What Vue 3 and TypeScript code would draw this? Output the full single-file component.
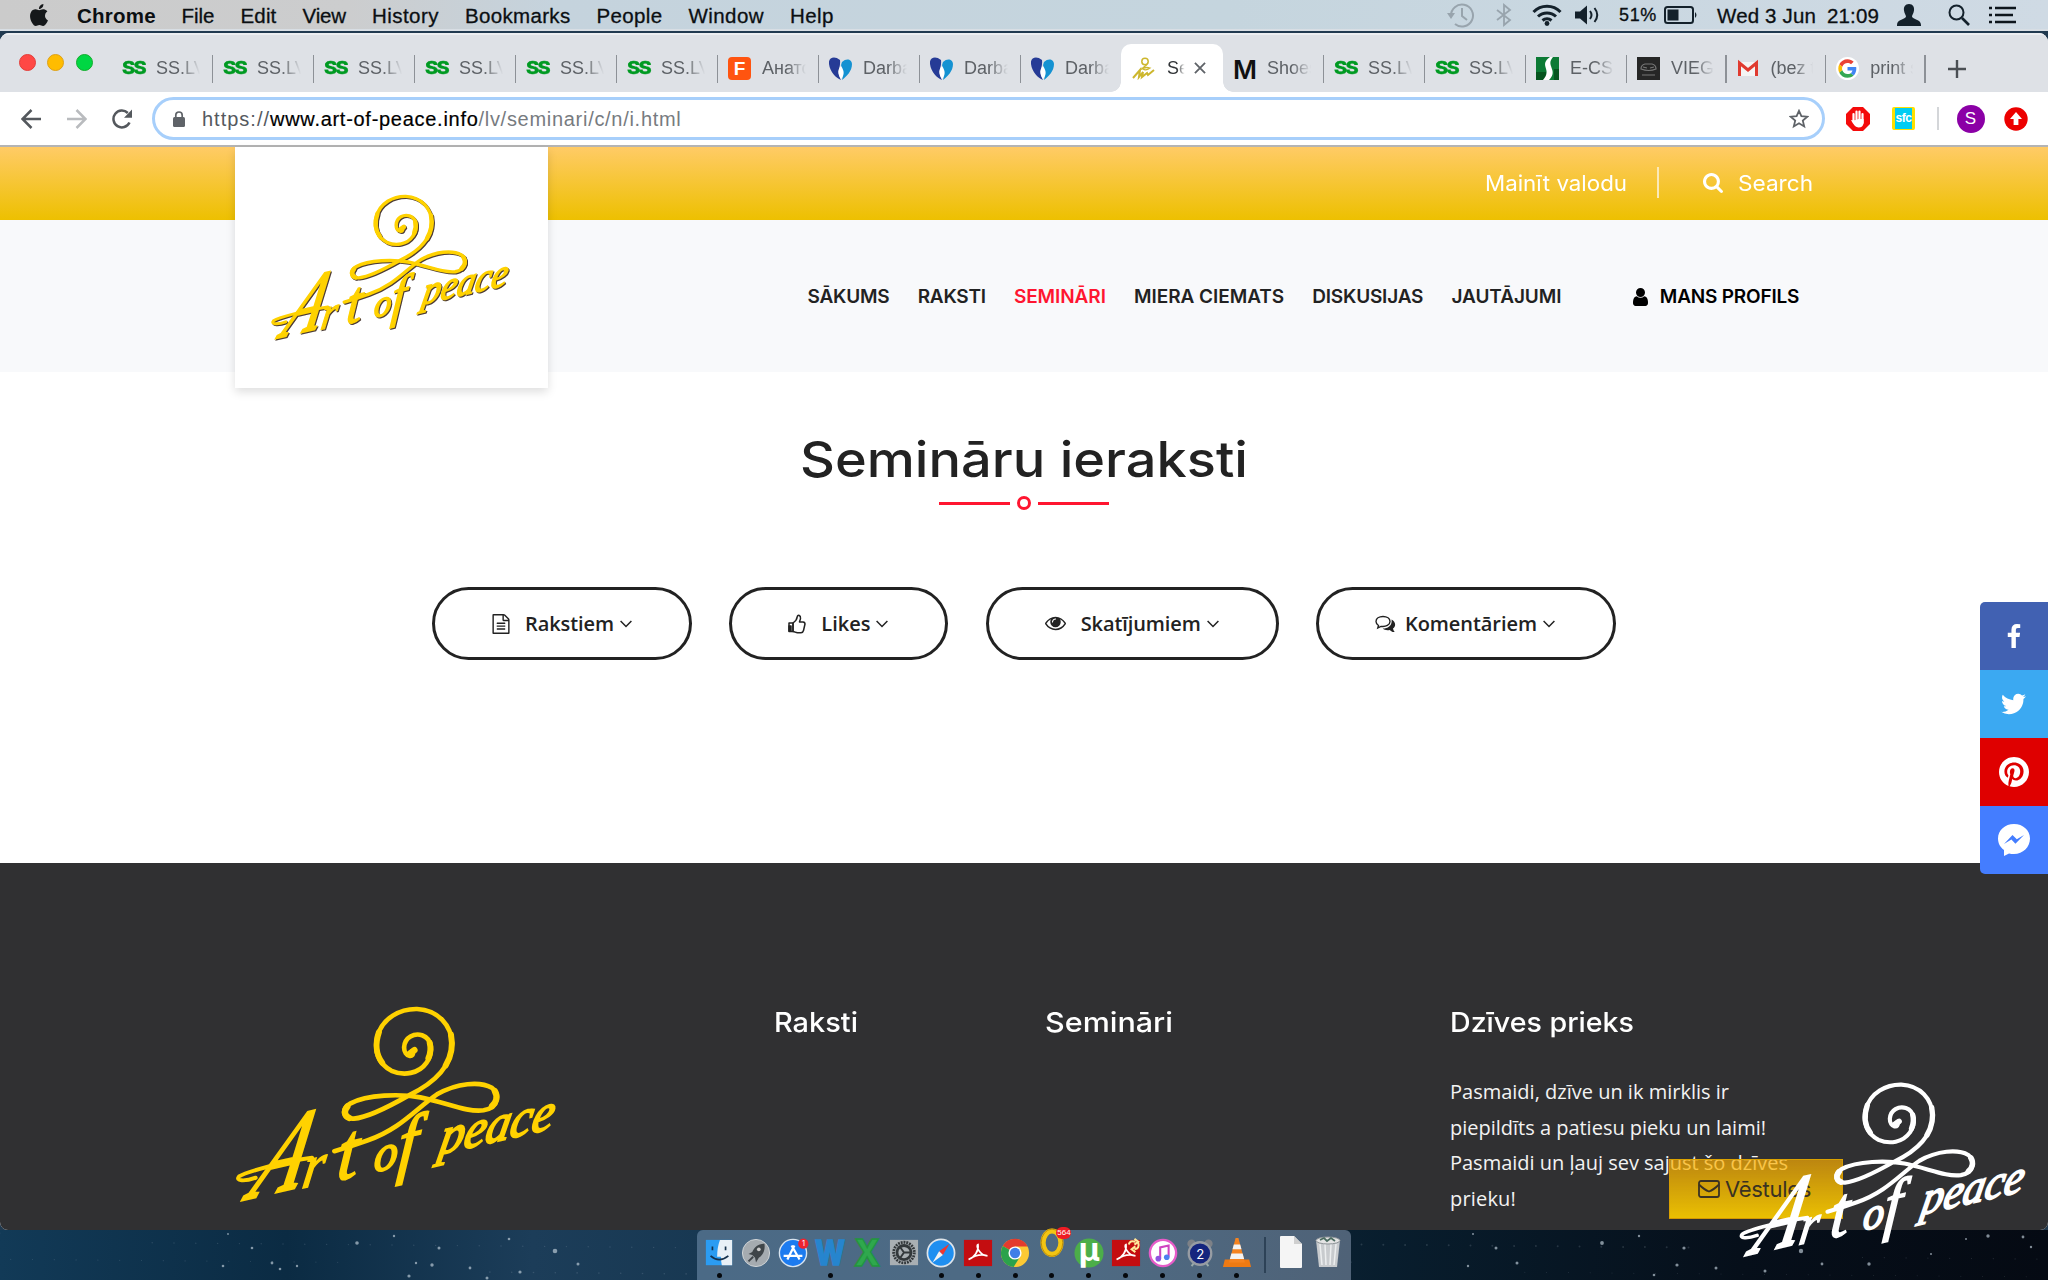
<script setup lang="ts">
interface Tab { kind: string; title: string; active?: boolean; short?: boolean }
interface Fitted { text: string; w: number }

// Makes a label occupy the requested width in pixels: by letter-spacing,
// or by widening the glyphs when the "wide" modifier is set.
const vFit = {
  mounted(el: HTMLElement, binding: { value: number; modifiers: Record<string, boolean> }) {
    const natural = el.getBoundingClientRect().width
    if (binding.modifiers.wide) {
      el.style.transformOrigin = '0 50%'
      el.style.transform = `scaleX(${(binding.value / natural).toFixed(4)})`
      el.style.marginRight = `${(binding.value - natural).toFixed(2)}px`
      return
    }
    const step = (binding.value - natural) / (el.textContent ?? '').length
    el.style.letterSpacing = `${step.toFixed(3)}px`
  },
}

const menu: Fitted[] = [
  { text: 'File', w: 33 }, { text: 'Edit', w: 36 }, { text: 'View', w: 43.5 },
  { text: 'History', w: 67 }, { text: 'Bookmarks', w: 105.5 }, { text: 'People', w: 66 },
  { text: 'Window', w: 75.5 }, { text: 'Help', w: 44 },
]

const tabs: Tab[] = [
  ...Array.from({ length: 6 }, () => ({ kind: 'ss', title: 'SS.LV' })),
  { kind: 'f', title: 'Анатомия' },
  { kind: 'heart', title: 'Darba' }, { kind: 'heart', title: 'Darba' }, { kind: 'heart', title: 'Darba' },
  { kind: 'logo', title: 'Sem', active: true },
  { kind: 'm', title: 'Shoes' },
  { kind: 'ss', title: 'SS.LV' }, { kind: 'ss', title: 'SS.LV' },
  { kind: 'ecs', title: 'E-CSN' },
  { kind: 'vieg', title: 'VIEGL', short: true },
  { kind: 'gmail', title: '(bez te', short: true },
  { kind: 'google', title: 'print s', short: true },
]

const nav = [
  { text: 'SĀKUMS', w: 82 }, { text: 'RAKSTI', w: 68 }, { text: 'SEMINĀRI', w: 92, on: true },
  { text: 'MIERA CIEMATS', w: 150 }, { text: 'DISKUSIJAS', w: 111 }, { text: 'JAUTĀJUMI', w: 110 },
]

const filters = [
  { icon: 'file', text: 'Rakstiem', w: 89, width: 260, gap: 15, pad: 57 },
  { icon: 'like', text: 'Likes', w: 49, width: 219, gap: 15, pad: 56 },
  { icon: 'eye', text: 'Skatījumiem', w: 120, width: 293, gap: 15, pad: 56 },
  { icon: 'talk', text: 'Komentāriem', w: 132, width: 300, gap: 9, pad: 56 },
]

const prose: Fitted[] = [
  { text: 'Pasmaidi, dzīve un ik mirklis ir', w: 279 },
  { text: 'piepildīts a patiesu pieku un laimi!', w: 316 },
  { text: 'Pasmaidi un ļauj sev sajust šo dzīves', w: 338 },
  { text: 'prieku!', w: 66 },
]

const dock = [
  { id: 'finder', run: true }, { id: 'launch' }, { id: 'store' }, { id: 'word', run: true },
  { id: 'excel' }, { id: 'prefs' }, { id: 'safari', run: true }, { id: 'acrobat', run: true },
  { id: 'chrome', run: true }, { id: 'opera', run: true }, { id: 'torrent', run: true },
  { id: 'acrobat2', run: true }, { id: 'itunes', run: true }, { id: 'clock', run: true }, { id: 'vlc', run: true },
]

const knownStars: number[][] = [
  [228, 4, .9], [252, 18, 1.3], [357, 13, 1.8], [394, 6, 1.2], [439, 18, 1.5], [555, 21, 2.3], [432, 35, 1.7],
  [272, 33, 1.4], [280, 39, 1.3], [297, 36, 1.2], [409, 46, 1.6], [470, 38, 1.4], [520, 42, 1.6], [487, 48, 1.5],
  [509, 9, 1.3], [416, 33, 1.2], [578, 34, 1.5], [223, 36, 1.3], [1473, 4, 1], [1496, 18, 1.5], [1602, 13, 1.9],
  [1639, 6, 1.2], [1684, 18, 1.6], [1517, 33, 1.5], [1468, 36, 1.2], [1677, 35, 1.6], [1716, 38, 1.5],
  [1801, 21, 2.2], [1822, 34, 1.4], [1869, 34, 1.7], [1765, 41, 1.5], [1988, 6, 1.7], [1966, 9, 1], [2023, 7, 1.4],
  [2031, 17, 1.2], [1654, 45, 1.3], [1931, 24, 1],
]
const stars = knownStars.concat(
  Array.from({ length: 150 }, (_, i) => [(i * 337.7) % 2048, 3 + ((i * 29.3) % 44), 0.5 + ((i * 7) % 6) / 10]),
)
</script>

<template>
  <div class="screen">
    <svg class="defs" width="0" height="0" aria-hidden="true">
      <symbol id="brand" viewBox="40 76 976 596" overflow="visible">
        <g fill="none" stroke="currentColor" stroke-linecap="round" stroke-linejoin="round">
          <path stroke-width="14" d="M576 214C585 237 550 234 551 203C553 172 582 160 605 167C636 178 640 220 618 250C595 283 550 290 513 274C472 252 460 212 470 172C485 114 540 87 590 88C652 91 695 136 695 195C693 262 640 312 565 348C500 385 440 415 400 418C365 420 360 390 390 372C440 345 540 343 600 354C680 370 740 400 790 393C835 385 840 345 815 325C780 305 710 310 650 345C590 385 540 450 440 484Q390 502 341 516" />
          <path stroke-width="19" d="M568 222L582 212" />
          <path stroke-width="18" d="M475 158C464 190 466 225 485 250M692 165C699 200 690 235 676 258M628 190Q634 212 624 236" />
          <path stroke-width="19" d="M824 335C834 352 828 370 816 380M380 382C368 396 372 411 386 416" />
          <path stroke-width="12" d="M104 596C70 608 42 606 54 592C75 578 190 547 274 536" />
        </g>
        <g class="script" fill="currentColor" stroke="currentColor">
          <text font-size="322" stroke-width="9" textLength="150" lengthAdjust="spacingAndGlyphs" transform="translate(76 660) rotate(-13) skewX(-36)">A</text>
          <text font-size="172" stroke-width="5" transform="translate(240 628) rotate(-13) skewX(-22)">r</text>
          <text font-size="232" stroke-width="5" transform="translate(345 606) rotate(-13) skewX(-18)">t</text>
          <text font-size="145" stroke-width="6" transform="translate(458 580) rotate(-13) skewX(-18)">o</text>
          <text font-size="215" stroke-width="6" transform="translate(528 573) rotate(-13) skewX(-18)">f</text>
          <text font-size="150" stroke-width="6" textLength="352" lengthAdjust="spacingAndGlyphs" transform="translate(652 527) rotate(-13) skewX(-24)">peace</text>
        </g>
      </symbol>
    </svg>

    <header class="menubar">
      <svg class="apple" viewBox="0 0 24 24"><path d="M12.152 6.896c-.948 0-2.415-1.078-3.96-1.04-2.04.027-3.91 1.183-4.961 3.014-2.117 3.675-.546 9.103 1.519 12.09 1.013 1.454 2.208 3.09 3.792 3.039 1.52-.065 2.09-.987 3.935-.987 1.831 0 2.35.987 3.96.948 1.637-.026 2.676-1.48 3.676-2.948 1.156-1.688 1.636-3.325 1.662-3.415-.039-.013-3.182-1.221-3.22-4.857-.026-3.04 2.48-4.494 2.597-4.559-1.429-2.09-3.623-2.324-4.39-2.376-2-.156-3.675 1.09-4.61 1.09zM15.53 3.83c.843-1.012 1.4-2.427 1.245-3.83-1.207.052-2.662.805-3.532 1.818-.78.896-1.454 2.338-1.273 3.714 1.338.104 2.715-.688 3.559-1.701" /></svg>
      <b v-fit="79" class="app">Chrome</b>
      <nav class="menus"><span v-for="m in menu" :key="m.text" v-fit="m.w">{{ m.text }}</span></nav>
      <div class="status">
        <svg class="tm" width="28" height="26" viewBox="0 0 28 26" fill="none" stroke="#98a4ad" stroke-width="2"><path d="M4 14A11 11 0 1 1 8 22M15 6v8l5 4" /><path d="M0 11h8l-4 6z" fill="#98a4ad" stroke="none" /></svg>
        <svg class="bt" width="16" height="24" viewBox="0 0 16 24" fill="none" stroke="#98a4ad" stroke-width="1.8"><path d="M1 7l13 10-6 5V2l6 5L1 17" /></svg>
        <svg class="wifi" width="30" height="22" viewBox="0 0 30 22" fill="none" stroke="#14212b" stroke-width="3"><path d="M1.5 8a19 19 0 0 1 27 0M6 12.500a13 13 0 0 1 18 0M10.500 16.500a7 7 0 0 1 9 0" /><circle cx="15" cy="19.500" r="2.400" fill="#14212b" stroke="none" /></svg>
        <svg class="vol" width="26" height="20" viewBox="0 0 26 20"><path d="M0 6.500h5l7-6v19l-7-6H0z" fill="#14212b" /><path d="M15 6q3 4 0 8M19.500 3q5.500 7 0 14" fill="none" stroke="#14212b" stroke-width="2" /></svg>
        <span v-fit="38" class="pct">51%</span>
        <svg class="bat" width="34" height="18" viewBox="0 0 34 18"><rect x="1" y="1" width="28" height="16" rx="2.500" fill="none" stroke="#14212b" stroke-width="2" /><rect x="3.500" y="3.500" width="11" height="11" fill="#14212b" /><path d="M31 6q3 3 0 6z" fill="#14212b" /></svg>
        <span v-fit="99" class="date">Wed 3 Jun</span><span v-fit="52" class="time">21:09</span>
        <svg class="who" width="24" height="22" viewBox="0 0 24 22"><path d="M12 0c4 0 5.500 3 5 6.500-.4 3-1.800 4.500-2 6C15.500 15.500 24 15 24 21v1H0v-1c0-6 8.500-5.500 9-8.500-.2-1.500-1.600-3-2-6C6.500 3 8 0 12 0z" fill="#14212b" /></svg>
        <svg class="spot" width="22" height="22" viewBox="0 0 22 22" fill="none" stroke="#14212b"><circle cx="8.500" cy="8.500" r="7" stroke-width="2" /><path d="M14 14l7 7" stroke-width="2.600" /></svg>
        <svg class="list" width="28" height="18" viewBox="0 0 28 18" stroke="#0d151c" stroke-width="2.600"><path d="M0 2h3M0 9h3M0 16h3M6 2h21M6 9h18M6 16h21" /></svg>
      </div>
    </header>

    <main class="window">
      <div class="strip">
        <div class="lights"><i class="red" /><i class="amber" /><i class="green" /></div>
        <div v-for="(t, i) in tabs" :key="i" class="tab" :class="{ active: t.active, short: t.short, last: i === 9 }">
          <span v-if="t.kind === 'ss'" class="fav ss">SS</span>
          <span v-else-if="t.kind === 'f'" class="fav eff">F</span>
          <svg v-else-if="t.kind === 'heart'" class="fav" viewBox="0 0 23 23"><path d="M11 3C5-2-1 1 0 7c1 8 7 14 12 16-5-10 0-12-1-20z" fill="#263b96" /><path d="M13 5c5-5 10-2 10 2 0 7-5 12-10 16 3-9-3-12 0-18z" fill="#1592d2" /><path d="M12 9c-5 5-2 10 0 13 3-4 4-7 0-13z" fill="#fff" /></svg>
          <svg v-else-if="t.kind === 'logo'" class="fav gold" viewBox="0 0 23 23" fill="none" stroke="#cdb72e"><circle cx="13" cy="4.500" r="3.200" stroke-width="1.500" /><path d="M15 7.500L9 12.500q4-3 9-1.500-4 3-7 1" stroke-width="1.300" /><path d="M1 21L8 13l-1 7 4-5-1 5 5-4 1 2 6-5" stroke-width="2" /></svg>
          <span v-else-if="t.kind === 'm'" class="fav em">M</span>
          <svg v-else-if="t.kind === 'ecs'" class="fav" viewBox="0 0 23 23"><path d="M0 0h23v23H0z" fill="#0c7a35" /><path d="M0 15h10v8H0zM18 12h5v11h-5z" fill="#06551f" /><path d="M14 0C2 9 17 12 7 23h6C23 13 9 9 17 0z" fill="#fff" /></svg>
          <svg v-else-if="t.kind === 'vieg'" class="fav" viewBox="0 0 23 23"><path d="M0 0h23v23H0z" fill="#262626" /><path d="M4 12q0-4 4-5h7q4 1 4 5-7 3-15 0zM6 10l4 1M17 10l-4 1M5 18h13" fill="none" stroke="#777" stroke-width="1.200" /></svg>
          <svg v-else-if="t.kind === 'gmail'" class="fav" viewBox="0 0 23 23"><path d="M3 5h16v14H3z" fill="#f4f4f4" /><path d="M2.500 19V6l8.500 7 8.500-7v13" fill="none" stroke="#e03a2f" stroke-width="3" /></svg>
          <svg v-else class="fav" viewBox="-6 -6 60 60"><circle cx="24" cy="24" r="30" fill="#fff" /><path fill="#EA4335" d="M24 9.500c3.540 0 6.710 1.220 9.210 3.600l6.850-6.850C35.900 2.380 30.470 0 24 0 14.620 0 6.510 5.380 2.560 13.220l7.980 6.190C12.430 13.720 17.740 9.500 24 9.500z" /><path fill="#4285F4" d="M46.980 24.550c0-1.570-.15-3.090-.38-4.550H24v9.020h12.940c-.58 2.960-2.260 5.480-4.780 7.180l7.730 6c4.510-4.180 7.090-10.360 7.090-17.650z" /><path fill="#FBBC05" d="M10.530 28.590c-.48-1.450-.76-2.990-.76-4.590s.27-3.140.76-4.590l-7.980-6.190C.92 16.460 0 20.120 0 24c0 3.880.92 7.540 2.560 10.780l7.970-6.190z" /><path fill="#34A853" d="M24 48c6.480 0 11.930-2.130 15.890-5.810l-7.730-6c-2.150 1.450-4.920 2.300-8.160 2.300-6.260 0-11.570-4.220-13.470-9.910l-7.980 6.190C6.510 42.620 14.620 48 24 48z" /></svg>
          <span class="title">{{ t.title }}</span>
          <svg v-if="t.active" class="close" width="12" height="12" viewBox="0 0 13 13" stroke="#5f6368" stroke-width="2"><path d="M1 1l11 11M12 1L1 12" /></svg>
        </div>
        <svg class="plus" width="18" height="18" viewBox="0 0 18 18" stroke="#4b4f54" stroke-width="2.400"><path d="M9 0v18M0 9h18" /></svg>
      </div>

      <div class="toolbar">
        <svg class="ic" width="20" height="20" viewBox="0 0 20 20" fill="none" stroke="#54585d" stroke-width="2.500"><path d="M20 10H2M10.500 1l-9 9 9 9" /></svg>
        <svg class="ic fwd" width="20" height="20" viewBox="0 0 20 20" fill="none" stroke="#b9bbbe" stroke-width="2.500"><path d="M0 10h18M9.500 1l9 9-9 9" /></svg>
        <svg class="ic re" width="20" height="20" viewBox="0 0 20 20"><path d="M17.500 13.500A8.400 8.400 0 1 1 15.800 4" fill="none" stroke="#54585d" stroke-width="2.500" /><path d="M20 .5V8.700h-8z" fill="#54585d" /></svg>
        <div class="omnibox">
          <svg width="12" height="16" viewBox="0 0 12 16"><rect y="6" width="12" height="10" rx="1.500" fill="#5f6368" /><path d="M2.800 6V4.200a3.200 3.200 0 0 1 6.400 0V6" fill="none" stroke="#5f6368" stroke-width="1.700" /></svg>
          <p class="url"><span v-fit="68">https://</span><b v-fit="208.500">www.art-of-peace.info</b><span v-fit="203" class="dim">/lv/seminari/c/n/i.html</span></p>
          <svg class="star" width="20" height="20" viewBox="0 0 20 20" fill="none" stroke="#5f6368" stroke-width="1.800"><path d="M10 1.800l2.400 5.400 5.900.5-4.500 3.900 1.400 5.800L10 14.300l-5.200 3.100 1.400-5.800L1.700 7.700l5.900-.5z" /></svg>
        </div>
        <svg class="hand" width="24" height="24" viewBox="0 0 24 24"><path d="M7 0h10l7 7v10l-7 7H7l-7-7V7z" fill="#f40b0b" /><path d="M7.500 7v7M10.500 4.500V14M13.500 4.500V14M16.500 7v9" stroke="#fff" stroke-width="2.200" stroke-linecap="round" /><path d="M5 13q5 1 7-1h5.600v4q-.6 4.500-5 4.500-4 0-7.600-7.500z" fill="#fff" /></svg>
        <span class="sfc">sfc</span>
        <i class="bar" />
        <span class="avatar">S</span>
        <svg class="up" width="24" height="24" viewBox="0 0 24 24"><circle cx="12" cy="12" r="11.700" fill="#ec0000" /><path d="M12 5l6 7h-3.600v6H9.600v-6H6z" fill="#fff" /></svg>
      </div>

      <section class="page">
        <div class="gold-bar">
          <span v-fit.wide="142">Mainīt valodu</span><i />
          <svg width="20" height="20" viewBox="64 128 1664 1664" fill="#fff"><path d="M1216 832q0-185-131.500-316.500t-316.500-131.500-316.500 131.500-131.500 316.500 131.500 316.500 316.500 131.500 316.500-131.500 131.500-316.500zm512 832q0 52-38 90t-90 38q-54 0-90-38l-343-342q-179 124-399 124-143 0-273.500-55.500t-225-150-150-225-55.500-273.500 55.500-273.500 150-225 225-150 273.500-55.500 273.500 55.500 225 150 150 225 55.500 273.500q0 220-124 399l343 343q37 37 37 90z" /></svg>
          <span v-fit.wide="75">Search</span>
        </div>
        <div class="navbar">
          <a v-for="n in nav" :key="n.text" v-fit="n.w" :class="{ on: n.on }">{{ n.text }}</a>
          <svg width="15" height="18" viewBox="256 128 1280 1536"><path d="M1536 1399q0 109-62.500 187t-150.500 78h-854q-88 0-150.500-78t-62.500-187q0-85 8.500-160.500t31.500-152 58.500-131 94-89 134.500-34.500q131 128 313 128t313-128q76 0 134.500 34.500t94 89 58.500 131 31.500 152 8.500 160.500zm-256-887q0 159-112.500 271.500t-271.500 112.500-271.500-112.500-112.500-271.500 112.500-271.500 271.500-112.500 271.500 112.500 112.500 271.500z" /></svg>
          <a v-fit="139.500" class="me">MANS PROFILS</a>
        </div>
        <div class="card"><svg class="brand"><use href="#brand" width="241" height="148" /></svg></div>

        <div class="content">
          <h1 v-fit.wide="448" class="heading">Semināru ieraksti</h1>
          <div class="rule"><i /><b /><i /></div>
          <div class="filters">
            <button v-for="f in filters" :key="f.text" :style="{ width: f.width + 'px', paddingLeft: f.pad + 'px' }">
              <svg v-if="f.icon === 'file'" width="18" height="20" viewBox="128 0 1536 1792"><path d="M1596 380q28 28 48 76t20 88v1152q0 40-28 68t-68 28h-1344q-40 0-68-28t-28-68v-1600q0-40 28-68t68-28h896q40 0 88 20t76 48zm-444-244v376h376q-10-29-22-41l-313-313q-12-12-41-22zm384 1528v-1024h-416q-40 0-68-28t-28-68v-416h-768v1536h1280zm-1024-864q0-14 9-23t23-9h704q14 0 23 9t9 23v64q0 14-9 23t-23 9h-704q-14 0-23-9t-9-23v-64zm736 224q14 0 23 9t9 23v64q0 14-9 23t-23 9h-704q-14 0-23-9t-9-23v-64q0-14 9-23t23-9h704zm0 256q14 0 23 9t9 23v64q0 14-9 23t-23 9h-704q-14 0-23-9t-9-23v-64q0-14 9-23t23-9h704z" /></svg>
              <svg v-else-if="f.icon === 'like'" width="18" height="20" viewBox="0 0 18 20" fill="none" stroke="#222" stroke-width="1.500" stroke-linejoin="round"><path d="M5 9C8 7 9 5 9.300 2.500 10 .5 12.800 1 12.500 4.500 12.300 6 11.500 7 11.500 8H15q2 .2 2 2l-1.500 6.500Q15 18.600 13 18.700H9.500C7.500 18.500 7 17.800 5 17.500z" /><path d="M1 9h4v8.500H1z" /><path d="M1 12h2v5H1z" fill="#222" /></svg>
              <svg v-else-if="f.icon === 'eye'" width="21" height="15" viewBox="0 384 1792 1152"><path d="M1664 960q-152-236-381-353 61 104 61 225 0 185-131.500 316.500t-316.500 131.500-316.500-131.500-131.500-316.500q0-121 61-225-229 117-381 353 133 205 333.500 326.500t434.500 121.500 434.500-121.500 333.500-326.500zm-720-384q0-20-14-34t-34-14q-125 0-214.500 89.500t-89.500 214.500q0 20 14 34t34 14 34-14 14-34q0-86 61-147t147-61q20 0 34-14t14-34zm848 384q0 34-20 69-140 230-376.500 368.500t-499.500 138.500-499.500-139-376.500-368q-20-35-20-69t20-69q140-229 376.500-368t499.500-139 499.500 139 376.500 368q20 35 20 69z" /></svg>
              <svg v-else width="21" height="18" viewBox="0 0 21 18"><path d="M8 1.500C4 1.500 1 3.600 1 6.500c0 2 1 3 2.500 4L2.800 13 6 11.400c5 .7 9-1.500 9-4.900 0-2.900-3-5-7-5z" fill="none" stroke="#222" stroke-width="1.400" /><path d="M16.500 4.500c4 2 5 6.500 1.500 9 .2 1.600 1 2.600 1.700 3.500-2 .3-3.500-.5-5-2-3 .5-5.500 0-7-1.500 6 0 9.800-3.500 8.800-9z" fill="#222" /></svg>
              <span v-fit="f.w" :style="{ marginLeft: f.gap + 'px' }">{{ f.text }}</span>
              <svg class="chev" width="12" height="8" viewBox="0 0 12 8" fill="none" stroke="#222" stroke-width="1.500"><path d="M.6 1L6 6.500 11.400 1" /></svg>
            </button>
          </div>
        </div>

        <footer class="footer">
          <svg class="brand"><use href="#brand" width="325" height="198" /></svg>
          <h2 v-fit.wide="84" class="c1">Raksti</h2>
          <h2 v-fit.wide="128" class="c2">Semināri</h2>
          <div class="c3">
            <h2 v-fit.wide="184">Dzīves prieks</h2>
            <p v-for="l in prose" :key="l.text"><span v-fit="l.w">{{ l.text }}</span></p>
          </div>
        </footer>

        <aside class="share">
          <a class="fb"><svg width="14" height="24" viewBox="479 0 864 1664"><path d="M1343 12v264h-157q-86 0-116 36t-30 108v189h293l-39 296h-254v759h-306v-759h-255v-296h255v-218q0-186 104-288.500t277-102.500q147 0 228 12z" /></svg></a>
          <a class="tw"><svg width="25" height="22" viewBox="108 250 1576 1290"><path d="M1684 408q-67 98-162 167 1 14 1 42 0 130-38 259.500t-115.500 248.500-184.500 210.500-258 146-323 54.500q-271 0-496-145 35 4 78 4 225 0 401-138-105-2-188-64.500t-114-159.500q33 5 61 5 43 0 85-11-112-23-185.500-111.500t-73.500-205.500v-4q68 38 146 41-66-44-105-115t-39-154q0-88 44-163 121 149 294.500 238.500t371.500 99.500q-8-38-8-74 0-134 94.500-228.500t228.500-94.500q140 0 236 102 109-21 205-78-37 115-142 178 93-10 186-50z" /></svg></a>
          <a class="pi"><svg width="30" height="30" viewBox="0 0 24 24"><path d="M12 0C5.373 0 0 5.372 0 12c0 5.084 3.163 9.426 7.627 11.174-.105-.949-.2-2.405.042-3.441.218-.937 1.407-5.965 1.407-5.965s-.359-.719-.359-1.782c0-1.668.967-2.914 2.171-2.914 1.023 0 1.518.769 1.518 1.690 0 1.029-.655 2.568-.994 3.995-.283 1.194.599 2.169 1.777 2.169 2.133 0 3.772-2.249 3.772-5.495 0-2.873-2.064-4.882-5.012-4.882-3.414 0-5.418 2.561-5.418 5.207 0 1.031.397 2.138.893 2.738a.36.36 0 0 1 .083.345l-.333 1.360c-.053.220-.174.267-.402.161-1.499-.698-2.436-2.889-2.436-4.649 0-3.785 2.750-7.262 7.929-7.262 4.163 0 7.398 2.967 7.398 6.931 0 4.136-2.607 7.464-6.227 7.464-1.216 0-2.359-.631-2.750-1.378l-.748 2.853c-.271 1.043-1.002 2.350-1.492 3.146C9.570 23.812 10.763 24 12 24c6.627 0 12-5.373 12-12 0-6.628-5.373-12-12-12z" /></svg></a>
          <a class="ms"><svg width="32" height="32" viewBox="0 0 32 32"><path d="M16 0C7 0 0 6.300 0 14.500c0 5 2.400 9 6 11.500v6l5-2.600c1.600.4 3.200.6 5 .6 9 0 16-7 16-15.500C32 6.300 25 0 16 0z" /><path d="M6 20l8.500-9 4.300 4.200L26 11l-8.600 8.800-4-4.200z" fill="#447dff" /></svg></a>
        </aside>

        <a class="mail">
          <svg width="22" height="18" viewBox="0 0 22 18" fill="none" stroke="#3a3222" stroke-width="1.800"><rect x="1" y="1" width="20" height="16" rx="2" /><path d="M1 4.500c3 3 7 6 10 7 3-1 7-4 10-7" /></svg>
          <span v-fit="86">Vēstules</span>
        </a>
      </section>
    </main>

    <div class="desktop">
      <svg width="2048" height="50"><circle v-for="(s, i) in stars" :key="i" :cx="s[0]" :cy="s[1]" :r="s[2]" fill="#c5d2dd" :opacity="i < 37 ? 0.65 : 0.16" /></svg>
    </div>

    <div class="dock">
      <div v-for="d in dock" :key="d.id" class="app-ic">
        <svg width="32" height="32" viewBox="0 0 32 32">
          <g v-if="d.id === 'finder'"><path d="M2 2h28v27H2z" fill="#2b9cf2" /><path d="M17 2h13v27H19q-1-5-1-9h-4Q14 10 17 2z" fill="#e8f0f7" /><path d="M9 9v4M23 9v4M7 19q9 8 19 0" fill="none" stroke="#17324d" stroke-width="1.800" /></g>
          <g v-else-if="d.id === 'launch'"><circle cx="16" cy="16" r="14.500" fill="#a5abb0" stroke="#d2d6d9" /><path d="M25 6c-7 0-11 4-13 9l-4 2 4 1 3 3 1 5 3-5c5-3 7-9 6-15z" fill="#3f4549" /><circle cx="19" cy="12" r="2" fill="#ccc" /><path d="M8 25l5-5" stroke="#3f4549" stroke-width="2" /></g>
          <g v-else-if="d.id === 'store'"><circle cx="16" cy="16" r="14.500" fill="#1c7bf0" stroke="#d8e4f0" stroke-width="1.500" /><path d="M10 23l7.500-15M14.500 8L23 23M6 19h20" stroke="#fff" stroke-width="2.400" /><circle cx="27" cy="6" r="5.500" fill="#ee2430" /><text x="25.500" y="9" font-size="8" fill="#fff">1</text></g>
          <g v-else-if="d.id === 'word'"><text x="0" y="29" font-size="36" font-weight="800" textLength="32" lengthAdjust="spacingAndGlyphs" fill="#2685ce" stroke="#2685ce" stroke-width="1.500">W</text></g>
          <g v-else-if="d.id === 'excel'"><text x="2" y="30" font-size="39" font-weight="800" textLength="28" lengthAdjust="spacingAndGlyphs" fill="#2fa84d" stroke="#22943f" stroke-width="1.500">X</text></g>
          <g v-else-if="d.id === 'prefs'"><path d="M1 2h30v27H1z" fill="#a9afb3" /><circle cx="16" cy="15.500" r="11" fill="none" stroke="#33383b" stroke-width="3" stroke-dasharray="2 1" /><circle cx="16" cy="15.500" r="7.500" fill="none" stroke="#33383b" stroke-width="3" /><path d="M16 15.500h8M16 15.500l-5-7M16 15.500l-5 7" stroke="#33383b" stroke-width="2" /></g>
          <g v-else-if="d.id === 'safari'"><circle cx="16" cy="16" r="14.500" fill="#1f8ff0" stroke="#dfe5ea" stroke-width="1.800" /><path d="M25 6L14 14l4 4z" fill="#f0372f" /><path d="M7 26l7-12 4 4z" fill="#f3f3f3" /></g>
          <g v-else-if="d.id === 'acrobat' || d.id === 'acrobat2'"><path d="M1 2h30v28H1z" fill="#c40d10" /><path d="M6 23c6-2 11-9 10-16-3 1 2 12 10 12-6-2-14 0-20 4z" fill="none" stroke="#fff" stroke-width="1.800" /><path v-if="d.id === 'acrobat2'" d="M19 7q1-5 7-3M29 5q2 6-4 7M25 1l4 3-4 3M26 9l-4 3 4 3" fill="none" stroke="#ffe99a" stroke-width="2.200" /></g>
          <g v-else-if="d.id === 'chrome'"><circle cx="16" cy="16" r="15" fill="#fcc934" /><path d="M16 16L3 8.500A15 15 0 0 1 29.500 9H16z" fill="#e33b2e" /><path d="M16 16L3 8.500A15 15 0 0 0 14.500 31L22 19z" fill="#2ba24c" /><circle cx="16" cy="16" r="7" fill="#fff" /><circle cx="16" cy="16" r="5.500" fill="#3f7ee8" /></g>
          <g v-else-if="d.id === 'opera'" transform="translate(0 -9)"><ellipse cx="16" cy="14" rx="9.500" ry="12.500" fill="none" stroke="#f3c513" stroke-width="5.500" /><ellipse cx="16" cy="14" rx="11.500" ry="14.500" fill="none" stroke="#b98a0b" stroke-width="1" /></g>
          <g v-else-if="d.id === 'torrent'"><circle cx="16" cy="16" r="15.500" fill="#4cae49" /><text x="5" y="25" font-size="35" font-weight="700" fill="#fff">µ</text></g>
          <g v-else-if="d.id === 'itunes'"><circle cx="16" cy="16" r="14" fill="#fff" stroke="#e65bc8" stroke-width="2.500" /><path d="M13 22V10l9-2v12" fill="none" stroke="#d043c0" stroke-width="2.200" /><circle cx="11" cy="22" r="3" fill="#8f55e0" /><circle cx="20" cy="20.500" r="3" fill="#4b80f0" /></g>
          <g v-else-if="d.id === 'clock'"><circle cx="7" cy="6" r="4.500" fill="#7d8187" /><circle cx="25" cy="6" r="4.500" fill="#7d8187" /><path d="M7 30l3-4M25 30l-3-4" stroke="#9aa" stroke-width="2" /><circle cx="16" cy="16.500" r="12" fill="#15257e" stroke="#979ca3" stroke-width="2.500" /><text x="12" y="22" font-size="14" fill="#fff">2</text></g>
          <g v-else><path d="M3 23h26l2 8H1z" fill="#ee7a13" /><path d="M14.500 0h3l7 26h-17z" fill="#f5831f" /><path d="M12.600 7h6.800l1.400 5h-9.600zM10 16.500h12l1.600 6H8.400z" fill="#f3f3f3" /></g>
        </svg>
        <span v-if="d.id === 'opera'" class="badge">564</span>
        <i v-if="d.run" />
      </div>
      <b class="split" />
      <svg class="doc" width="22" height="32" viewBox="0 0 22 32"><path d="M0 1q0-1 1-1h13l8 8v23q0 1-1 1H1q-1 0-1-1z" fill="#f5f5f5" /><path d="M14 0l8 8h-8z" fill="#cfcfcf" /></svg>
      <svg width="26" height="32" viewBox="0 0 26 32"><path d="M1 4h24l-3 27H4z" fill="#c8cbce" /><path d="M5 8l2 21M10 8l1 21M16 8l-1 21M21 8l-2 21" stroke="#eceeef" stroke-width="1.500" /><ellipse cx="13" cy="4.500" rx="12" ry="3.500" fill="#e4e4e4" stroke="#8f9599" /><path d="M5 4l4-2 3 3 4-3 4 3" stroke="#4b6b60" stroke-width="1.800" fill="none" /></svg>
    </div>

    <svg class="watermark"><use href="#brand" width="290" height="177" /></svg>
  </div>
</template>

<style>
html, body { margin: 0; background: #0a1a28; }
</style>

<style scoped>
* { box-sizing: border-box; }
.screen { position: relative; width: 2048px; height: 1280px; overflow: hidden; display: flex; flex-direction: column; background: #213a50; font-family: "Liberation Sans", Arial, sans-serif; }
.defs { position: absolute; }
.script { font-family: "Liberation Serif", serif; font-style: italic; }
span, b, a { white-space: nowrap; }
svg { display: block; flex: none; }

.menubar { height: 31px; flex: none; display: flex; align-items: center; background: linear-gradient(90deg, #cbcbcb 0, #cccdce 17%, #c5d3dd 27%, #c5d5de 60%, #cfdae4 100%); color: #0b0f12; font-size: 20.500px; border-bottom: 2px solid #d8dee4; }
.menubar span, .menubar b { position: relative; top: 1px; }
.apple { width: 22px; height: 22px; margin-left: 28px; fill: #15181a; }
.app { margin-left: 27px; }
.menus { display: flex; gap: 26px; margin-left: 25.500px; -webkit-text-stroke: .3px #0b0f12; }
.status { display: flex; align-items: center; margin-left: auto; padding-right: 31px; -webkit-text-stroke: .3px #0b0f12; }
.tm { margin-right: 1px; }
.bt { margin-left: 20px; }
.wifi { margin-left: 20px; }
.vol { margin-left: 13px; }
.pct { margin-left: 18px; font-size: 18px; }
.bat { margin-left: 7px; }
.date { margin-left: 19px; }
.time { margin-left: 11px; }
.who { margin-left: 18px; }
.spot { margin-left: 27px; }
.list { margin-left: 19px; }

.window { margin-top: 2px; height: 1197px; flex: none; display: flex; flex-direction: column; border-radius: 9px 9px 8px 8px; overflow: hidden; background: #fff; }
.strip { height: 59px; flex: none; display: flex; background: #dee1e6; border-top: 2px solid #eceef1; }
.lights { width: 111px; display: flex; gap: 11.500px; padding: 19px 0 0 18.500px; flex: none; }
.lights i { width: 17px; height: 17px; border-radius: 50%; border: 1px solid #e33e3a; background: #ff4845; }
.lights .amber { background: #ffbc00; border-color: #dea116; }
.lights .green { background: #00d743; border-color: #12ad2c; }
.tab { position: relative; width: 101px; flex: none; height: 48px; margin-top: 9px; padding: 0 11px; display: flex; align-items: center; }
.tab.short { width: 99.600px; }
.tab::after { content: ""; position: absolute; right: -1px; top: 11px; width: 1.500px; height: 28px; background: #8d9197; }
.tab.active { background: #fff; border-radius: 10px 10px 0 0; width: 102px; }
.tab.active + .tab { margin-left: -1px; }
.tab.active::before, .tab.active::after { content: ""; position: absolute; top: auto; bottom: 0; width: 10px; height: 10px; background: radial-gradient(circle at 0 0, transparent 9.500px, #fff 10px); }
.tab.active::before { left: -10px; }
.tab.active::after { right: -10px; background: radial-gradient(circle at 100% 0, transparent 9.500px, #fff 10px); }
.tab.last::after { display: none; }
.fav { width: 23px; height: 23px; flex: none; line-height: 23px; text-align: center; }
.ss { color: #009a22; font: 800 20px/23px Inter, sans-serif; letter-spacing: -1.800px; -webkit-text-stroke: .3px #009a22; transform: scaleY(.85); }
.eff { background: #ff5410; color: #fff; border-radius: 4px; font-weight: 700; font-size: 19px; }
.em { color: #111; font: 600 26px/25px Inter, sans-serif; }
.title { width: 46px; margin-left: 11px; overflow: hidden; font-size: 18px; line-height: 24px; color: #5d6166; -webkit-mask-image: linear-gradient(90deg, #000 55%, transparent 98%); mask-image: linear-gradient(90deg, #000 55%, transparent 98%); }
.active .title { width: 18px; margin-left: 12px; color: #303336; }
.close { margin-left: 9px; }
.plus { margin: 25px 0 0 23px; }

.toolbar { height: 55px; flex: none; display: flex; align-items: center; background: #fff; border-bottom: 2px solid #b4b4b4; padding-left: 21px; }
.fwd { margin-left: 26px; }
.re { margin-left: 25px; }
.omnibox { width: 1673px; height: 43px; margin-left: 20px; border: 3px solid #a7cffb; border-radius: 22px; display: flex; align-items: center; padding-left: 18px; }
.url { display: flex; margin: 0 0 0 17px; font-size: 20px; line-height: 26px; color: #55595e; }
.url b { font-weight: 400; color: #000; -webkit-text-stroke: .2px #000; }
.url .dim { color: #777b80; }
.star { margin: 0 13px 0 auto; }
.hand { margin-left: 21px; }
.sfc { width: 23px; height: 23px; margin-left: 22px; background: #00cdf3; border: 3px solid #ffe000; border-width: 1px 3px; color: #fff; font-weight: 700; font-size: 12px; line-height: 20px; text-align: center; letter-spacing: -.5px; border-radius: 2px; }
.bar { width: 1.500px; height: 23px; margin-left: 22px; background: #d4d6d9; }
.avatar { width: 28px; height: 28px; border-radius: 50%; margin-left: 18px; background: #8b00a6; color: #fff; font-size: 17px; line-height: 28px; text-align: center; }
.up { margin-left: 19px; }

.page { position: relative; height: 1083px; flex: none; display: flex; flex-direction: column; }
.gold-bar { height: 73px; flex: none; display: flex; align-items: center; justify-content: flex-end; padding: 0 235px 2px 0; background: linear-gradient(#ffcb66, #edc000); color: #fff; font: 400 22px/30px Inter, sans-serif; }
.gold-bar i { width: 2px; height: 31px; margin: 0 44px 0 30px; background: #fbe9b8; }
.gold-bar span:last-child { margin-left: 15px; }
.navbar { height: 152px; flex: none; display: flex; align-items: center; padding: 1px 0 0 807.500px; gap: 28.200px; background: #f8f9fb; font: 600 19px/26px Inter, sans-serif; color: #222; }
.navbar .on { color: #ff1530; }
.navbar svg { margin-left: 43px; }
.navbar .me { margin-left: -16px; color: #000; }
.card { position: absolute; left: 235px; top: 0; width: 313px; height: 241px; background: #fff; box-shadow: 0 4px 9px rgba(0, 0, 0, .13); display: flex; padding: 46px 0 0 35px; }
.card .brand { width: 246px; height: 154px; color: #ffd200; filter: drop-shadow(1.500px 1.500px .3px #4d3c36); }
.content { height: 491px; flex: none; display: flex; flex-direction: column; align-items: center; }
h1 { margin: 57px 0 0; font: 500 50px/60px Inter, sans-serif; color: #222; white-space: nowrap; }
.rule { display: flex; align-items: center; gap: 7px; margin-top: 7px; height: 14px; }
.rule i { width: 71px; height: 3px; background: #ff1530; }
.rule b { width: 14px; height: 14px; border: 3px solid #ff1530; border-radius: 50%; }
.filters { display: flex; gap: 37.300px; margin-top: 77px; }
button { height: 73px; border: 3px solid #222; border-radius: 37px; background: #fff; display: flex; align-items: center; padding: 0; font: 600 20px/30px "Open Sans", sans-serif; color: #222; fill: #222; }
.chev { margin-left: 6px; }
.footer { height: 367px; flex: none; display: flex; align-items: flex-start; background: #303032; color: #fff; }
.footer .brand { width: 325px; height: 198px; margin: 142px 0 0 234px; color: #ffd200; }
h2 { margin: 0; font: 500 27.500px/36px Inter, sans-serif; white-space: nowrap; width: max-content; }
.footer > h2 { margin-top: 141px; }
.footer .c1 { margin-left: 215px; }
.footer .c2 { margin-left: 187px; }
.c3 { width: 360px; margin: 141px 0 0 277px; }
.c3 h2 { margin-bottom: 34px; }
.c3 p { margin: 0; font: 400 20px/35.500px "Open Sans", sans-serif; color: #f3f3f3; }

.share { position: absolute; right: 0; top: 454.500px; width: 68.500px; border-radius: 5px 0 0 5px; overflow: hidden; display: flex; flex-direction: column; }
.share a { height: 68.200px; display: flex; align-items: center; justify-content: center; fill: #fff; }
.fb { background: #4161b2; }
.tw { background: #3ba9f2; }
.pi { background: #df0000; }
.ms { background: #447dff; }
.mail { position: absolute; left: 1669px; top: 1012px; width: 174px; height: 60px; display: flex; align-items: center; padding-left: 28px; gap: 5px; background: linear-gradient(rgba(255, 175, 0, .68), rgba(240, 196, 0, .97)); border: 1px solid rgba(215, 155, 0, .8); font: 400 22px/30px Inter, sans-serif; color: #3a3222; }

.desktop { height: 50px; flex: none; background: linear-gradient(90deg, #123a57 0, #0b2b43 14%, #1c3d59 26%, #123148 46%, #081d2d 68%, #060f1a 85%, #050a13 100%); }
.dock { position: absolute; left: 697px; top: 1230px; width: 654px; height: 50px; padding-left: 4px; display: flex; border-radius: 6px 6px 0 0; background: linear-gradient(90deg, #4b6a86, #4e6a83 60%, #4f6277); }
.app-ic { position: relative; width: 36.950px; display: flex; justify-content: center; padding-top: 7px; }
.app-ic svg { overflow: visible; width: 30px; height: 32px; font-family: Inter, sans-serif; }
.app-ic i { position: absolute; bottom: 2.500px; left: 16px; width: 5px; height: 5px; border-radius: 50%; background: #05080c; }
.badge { position: absolute; left: 23px; top: -3px; width: 15px; height: 12px; border-radius: 7px; background: #ef1c24; color: #fff; font-size: 8px; line-height: 12px; text-align: center; }
.split { width: 1.500px; height: 36px; margin: 7px 14px 0 9px; background: #2d4257; }
.dock > svg { margin-top: 6px; }
.doc { margin-right: 13px; }
.watermark { position: absolute; left: 1738px; top: 1081px; width: 290px; height: 180px; color: #fff; overflow: visible; }
</style>
